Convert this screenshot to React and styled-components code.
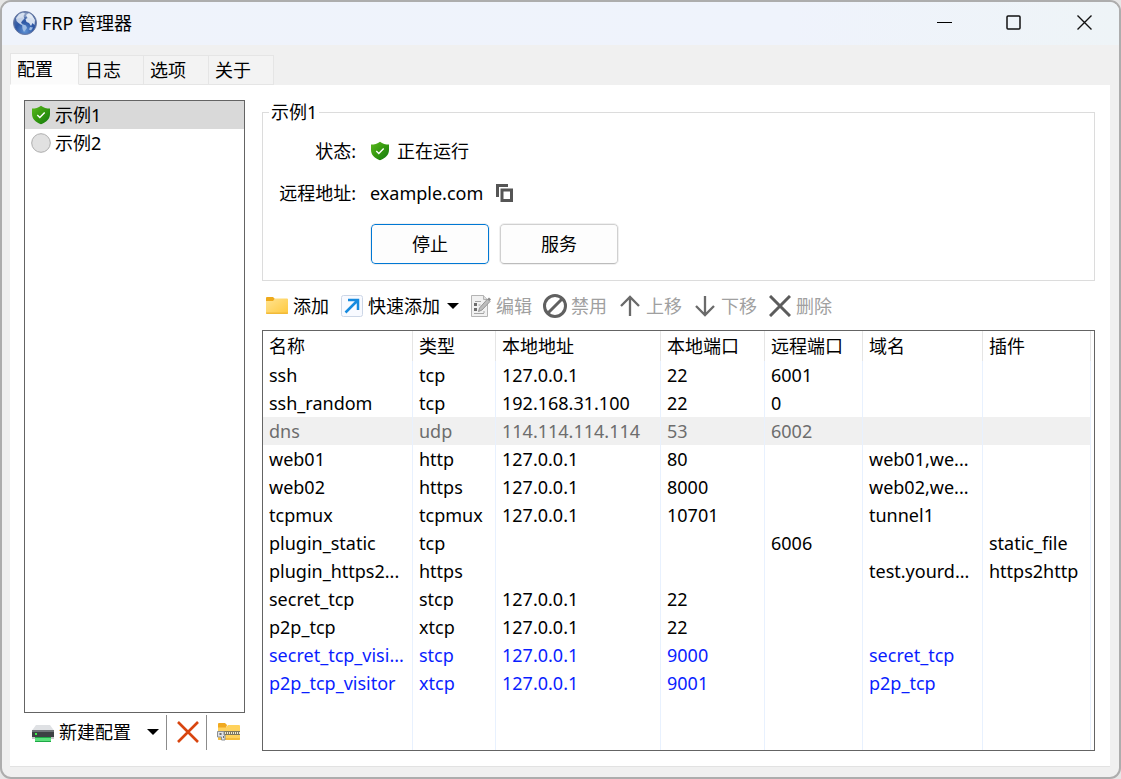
import React, { useState } from "react";
import styled, { createGlobalStyle } from "styled-components";

const GlobalStyle = createGlobalStyle`
  * {
    box-sizing: border-box;
  }

  body {
    margin: 0;
    background: #e6e6e6;
    color: #000;
    font: 18px/24px "Noto Sans", "Noto Sans CJK SC", sans-serif;
  }

  button {
    color: inherit;
    font: inherit;
  }

  svg {
    display: block;
    flex: none;
  }
`;

const Window = styled.div`
  display: flex;
  flex-direction: column;
  min-height: 100vh;
  border: 2px solid #adadad;
  border-radius: 11px;
  background: #f0f0f0;
  overflow: hidden;
`;

const TitleBar = styled.header`
  display: flex;
  align-items: center;
  gap: 5px;
  height: 43px;
  padding: 0 0 2px 11px;
  background: linear-gradient(to right, #eff3fb, #eff3fc 70%, #eef4f7);
`;

const Title = styled.h1`
  flex: 1;
  margin: 0;
  font-size: 18px;
  font-weight: 400;
`;

const WindowButtons = styled.div`
  display: flex;
`;

const WindowButton = styled.button`
  display: flex;
  align-items: center;
  justify-content: center;
  width: 70px;
  height: 41px;
  padding: 0;
  border: 0;
  background: none;
`;

const Tabs = styled.nav`
  display: flex;
  align-items: flex-end;
  height: 40px;
  padding: 0 8px;
`;

const Tab = styled.button`
  width: ${props => (props.$active ? 69 : 65)}px;
  height: ${props => (props.$active ? 32 : 30)}px;
  padding: 0 6px;
  border: 1px solid #e5e5e5;
  border-bottom-color: ${props => (props.$active ? "#fdfdfd" : "#e5e5e5")};
  border-left-width: ${props => (props.$active ? 1 : 0)}px;
  background: ${props => (props.$active ? "#fbfbfb" : "#f3f3f3")};
  text-align: left;
`;

const Panel = styled.main`
  display: flex;
  flex: 1;
  gap: 17px;
  margin: 0 9px 10px 8px;
  padding: 15px 15px 15px 14px;
  border-bottom: 1px solid #e2e2e2;
  background: #fff;
`;

const Sidebar = styled.aside`
  display: flex;
  flex: none;
  flex-direction: column;
  width: 221px;
`;

const ConfigList = styled.ul`
  flex: 1;
  margin: 0;
  padding: 0;
  border: 1px solid #646464;
  list-style: none;
`;

const ConfigItem = styled.li`
  display: flex;
  align-items: center;
  gap: 4px;
  height: 28px;
  padding-left: 6px;
  background: ${props => (props.$selected ? "#d9d9d9" : "none")};
`;

const SidebarTools = styled.div`
  display: flex;
  align-items: center;
  height: 38px;
  padding-left: 8px;
`;

const ToolButton = styled.button`
  display: flex;
  flex: none;
  align-items: center;
  gap: 5px;
  padding: 0;
  border: 0;
  background: none;
  color: ${props => (props.disabled ? "#a0a0a0" : "#000")};
  white-space: nowrap;
`;

const SidebarButton = styled(ToolButton)`
  height: 35px;
  padding: 0 7px 0 10px;
  border-left: 1px solid #8c8c8c;

  &:first-child {
    padding-left: 0;
    border-left: 0;
  }

  &:last-child {
    padding-right: 0;
  }
`;

const Caret = styled.span`
  margin-left: ${props => props.$gap}px;
  border: 6px solid transparent;
  border-top-color: #000;
  border-bottom-width: 0;
`;

const Content = styled.section`
  display: flex;
  flex: 1;
  flex-direction: column;
  min-width: 0;
`;

const Group = styled.fieldset`
  margin: 0;
  padding: 6px 0 16px;
  border: 1px solid #dcdcdc;
`;

const Legend = styled.legend`
  margin-left: 6px;
  padding: 0 2px;
`;

const Fields = styled.dl`
  display: grid;
  grid-template-columns: 93px 1fr;
  grid-auto-rows: 42px;
  column-gap: 14px;
  align-items: center;
  margin: 0;
`;

const FieldName = styled.dt`
  text-align: right;
`;

const FieldValue = styled.dd`
  display: flex;
  align-items: center;
  gap: ${props => props.$gap}px;
  margin: 0;
`;

const IconButton = styled.button`
  padding: 0;
  border: 0;
  background: none;
`;

const Actions = styled.div`
  display: flex;
  gap: 11px;
  padding: 10px 0 0 108px;
`;

const ActionButton = styled.button`
  width: 118px;
  height: 40px;
  padding: 0;
  border: 1px solid ${props => (props.$primary ? "#0078d4" : "#d0d0d0")};
  border-bottom-color: ${props => (props.$primary ? "#0078d4" : "#bcbcbc")};
  border-radius: 4px;
  outline: 1px solid #f0f0f0;
  background: #fdfdfd;
`;

const Toolbar = styled.div`
  display: flex;
  align-items: center;
  gap: 12px;
  height: 49px;
  padding-left: 4px;
`;

const TableFrame = styled.div`
  display: grid;
  flex: 1;
  border: 1px solid #646464;
`;

const Table = styled.table`
  width: 100%;
  height: 100%;
  border-collapse: separate;
  border-spacing: 0;
  table-layout: fixed;
`;

const HeadCell = styled.th`
  height: 30px;
  padding: 0 6px;
  border-right: 1px solid #e5e5e5;
  font-weight: 400;
  text-align: left;
`;

const rowColors = {
  disabled: "#6d6d6d",
  visitor: "#0a1eff"
};

const Row = styled.tr`
  height: 28px;
  color: ${props => rowColors[props.$kind] || "#000"};
`;

const Cell = styled.td`
  padding: 0 6px;
  border-right: 1px solid #e8f1fe;
  background: ${props => (props.$shaded ? "#f0f0f0" : "none")};
  white-space: nowrap;
`;

const EndCell = styled.td`
  padding: 0;
`;

const FillRow = styled.tr`
  height: auto;
`;

const columns = [
  { key: "name", label: "名称", width: 150 },
  { key: "type", label: "类型", width: 83 },
  { key: "localIp", label: "本地地址", width: 165 },
  { key: "localPort", label: "本地端口", width: 104 },
  { key: "remotePort", label: "远程端口", width: 98 },
  { key: "domain", label: "域名", width: 120 },
  { key: "plugin", label: "插件", width: 108 }
];

const proxies = [
  { name: "ssh", type: "tcp", localIp: "127.0.0.1", localPort: "22", remotePort: "6001" },
  { name: "ssh_random", type: "tcp", localIp: "192.168.31.100", localPort: "22", remotePort: "0" },
  { name: "dns", type: "udp", localIp: "114.114.114.114", localPort: "53", remotePort: "6002", kind: "disabled" },
  { name: "web01", type: "http", localIp: "127.0.0.1", localPort: "80", domain: "web01,we..." },
  { name: "web02", type: "https", localIp: "127.0.0.1", localPort: "8000", domain: "web02,we..." },
  { name: "tcpmux", type: "tcpmux", localIp: "127.0.0.1", localPort: "10701", domain: "tunnel1" },
  { name: "plugin_static", type: "tcp", remotePort: "6006", plugin: "static_file" },
  { name: "plugin_https2...", type: "https", domain: "test.yourd...", plugin: "https2http" },
  { name: "secret_tcp", type: "stcp", localIp: "127.0.0.1", localPort: "22" },
  { name: "p2p_tcp", type: "xtcp", localIp: "127.0.0.1", localPort: "22" },
  { name: "secret_tcp_visi...", type: "stcp", localIp: "127.0.0.1", localPort: "9000", domain: "secret_tcp", kind: "visitor" },
  { name: "p2p_tcp_visitor", type: "xtcp", localIp: "127.0.0.1", localPort: "9001", domain: "p2p_tcp", kind: "visitor" }
];

const GlobeIcon = () => (
  <svg width="24" height="24" viewBox="0 0 24 24">
    <defs>
      <radialGradient id="globe" cx="50%" cy="85%" r="80%">
        <stop offset="0" stopColor="#5f92d4" />
        <stop offset="0.5" stopColor="#2d56a4" />
        <stop offset="1" stopColor="#5c76a8" />
      </radialGradient>
    </defs>
    <circle cx="12" cy="12" r="11.5" fill="url(#globe)" stroke="#6c7ba3" />
    <path d="M3 7 6 3l4-1.500 2 1L10.500 5l1 2.500L9 10l-1 2 1.500 1-1 1-3-2-2-2z" fill="#c3d1e9" />
    <path d="m13 4 3-2 3 2 3 5-.500 5-2-2-1.500 3-2-3-2.500-1-1-3 2-1z" fill="#d7e1f1" />
    <path d="m9 13 4 1.500 1 2.500-3 4-1.500-3zM17 16l3 .500-2 3-2-1z" fill="#9dbbe4" />
    <path d="M3 8Q6 1.500 12 1.500T21 8Q12 4.500 3 8z" fill="#fff" opacity=".3" />
  </svg>
);

const ShieldIcon = () => (
  <svg width="20" height="20" viewBox="0 0 20 20">
    <defs>
      <linearGradient id="shield" x1="0" y1="0" x2="1" y2="1">
        <stop offset="0" stopColor="#5bb91e" />
        <stop offset="0.5" stopColor="#35990f" />
        <stop offset="1" stopColor="#117a10" />
      </linearGradient>
    </defs>
    <path
      d="M10 .8C7.500 2.800 4.300 3.600 1 3.600V9c0 4.900 3.800 8.300 9 10.200 5.200-1.900 9-5.300 9-10.200V3.600C15.700 3.600 12.500 2.800 10 .8z"
      fill="url(#shield)"
    />
    <path d="m6.300 10 2.500 2.400 4.900-5" fill="none" stroke="#fff" strokeWidth="1.400" />
  </svg>
);

const IdleIcon = () => (
  <svg width="20" height="20" viewBox="0 0 20 20">
    <circle cx="10" cy="10" r="9.300" fill="#e1e1e1" stroke="#adadad" />
  </svg>
);

const CopyIcon = () => (
  <svg width="18" height="18" viewBox="0 0 18 18">
    <path d="M1.500 13V1.500H12" fill="none" stroke="#555" strokeWidth="3" />
    <path d="M6 6h9.500v10.500H6z" fill="none" stroke="#555" strokeWidth="3" />
  </svg>
);

const DriveIcon = () => (
  <svg width="22" height="22" viewBox="0 0 22 22">
    <path d="M4 4h14l4 5.500H0z" fill="#dfe1e4" />
    <path d="M0 9h22v7H0z" fill="#3d4144" />
    <path d="M0 9h22v2H0z" fill="#6e7377" />
    <path d="M3 12h2v2H3z" fill="#3df04a" />
    <path d="M3 16h16v4.500H3z" fill="#5be07c" />
    <path d="M3 16h16v1H3zM3 20h16v1H3z" fill="#1fa846" />
    <path d="M0 16h3v2H0zM19 16h3v2h-3z" fill="#c4c6c8" />
  </svg>
);

const RedCrossIcon = () => (
  <svg width="22" height="22" viewBox="0 0 22 22">
    <path d="m1 1 20 20M21 1 1 21" fill="none" stroke="#d8450f" strokeWidth="2.600" />
  </svg>
);

const ZipIcon = () => (
  <svg width="24" height="22" viewBox="0 0 24 22">
    <path d="M1 3q0-1 1-1h6l2 2-1 3H1z" fill="#f0a920" />
    <path d="M1 6.500h8l2-2.500h11q1 0 1 1v13q0 1-1 1H2q-1 0-1-1z" fill="#ffd25c" />
    <path d="M1 17h22v1q0 1-1 1H2q-1 0-1-1z" fill="#f7bd3c" />
    <path d="M7 10h16v4H7z" fill="#7f785f" />
    <path d="M8 12h15" stroke="#f2ead0" strokeWidth="2" strokeDasharray="1 1" />
    <path d="M.5 10.500H7V14h1v5H4.500v-3h-4z" fill="#dfe1e4" stroke="#8b8f94" />
    <path d="M2.500 12h2v2h-2zM6 15h1v2H6z" fill="#6f6f6f" />
  </svg>
);

const FolderIcon = () => (
  <svg width="22" height="22" viewBox="0 0 22 22">
    <defs>
      <linearGradient id="folder" x1="0" y1="0" x2="1" y2="1">
        <stop offset="0" stopColor="#ffe391" />
        <stop offset="1" stopColor="#ffc93e" />
      </linearGradient>
    </defs>
    <path d="M0 3q0-1 1-1h6l2 2-2 5H0z" fill="#eeaa1c" />
    <path d="M0 6h7l2-2.500h12q1 0 1 1V18q0 1-1 1H1q-1 0-1-1z" fill="url(#folder)" />
    <path d="M0 17.500h22q0 1.500-1 1.500H1q-1 0-1-1.500z" fill="#f2ba38" />
  </svg>
);

const ShortcutIcon = () => (
  <svg width="22" height="22" viewBox="0 0 22 22">
    <rect x=".5" y=".5" width="21" height="21" rx="2" fill="#f8faff" stroke="#ccd6e6" />
    <path d="M4.500 17.500 17 5M7 5h10v10" fill="none" stroke="#168bdf" strokeWidth="2.500" />
  </svg>
);

const EditIcon = () => (
  <svg width="20" height="22" viewBox="0 0 20 22">
    <path d="M.5.500h12l4 4v17H.5z" fill="#f1f1f1" stroke="#b4b4b4" />
    <path d="M12.500.500v4h4" fill="#ddd" stroke="#b4b4b4" />
    <path d="M3 8h3v3H3zM3 13h3v3H3z" fill="#6c6c6c" />
    <path d="M4 6.500h6M7.500 10h2M3 18.500h10M13 16v2" stroke="#a6a6a6" />
    <path d="m8.500 13 8-9 2.500 2.500-8 8.500-3.500 1.500z" fill="#bdbdbd" stroke="#969696" />
    <path d="m16.500 4 1.500-1.500 2 2L18.500 6z" fill="#8a8a8a" />
  </svg>
);

const BanIcon = () => (
  <svg width="22" height="22" viewBox="1 1 22 22" overflow="visible">
    <circle cx="12" cy="12" r="10.500" fill="none" stroke="#606060" strokeWidth="3" />
    <path d="M5 19 19 5" stroke="#606060" strokeWidth="3" />
  </svg>
);

const UpIcon = () => (
  <svg width="22" height="22" viewBox="0 0 22 22">
    <path d="M11 21V2.500M2 11l9-9 9 9" fill="none" stroke="#6a6a6a" strokeWidth="2.300" />
  </svg>
);

const DownIcon = () => (
  <svg width="22" height="22" viewBox="0 0 22 22">
    <path d="M11 1v18.500M2 11l9 9 9-9" fill="none" stroke="#6a6a6a" strokeWidth="2.300" />
  </svg>
);

const CrossIcon = () => (
  <svg width="22" height="22" viewBox="0 0 22 22">
    <path d="m1 1 20 20M21 1 1 21" fill="none" stroke="#5c5c5c" strokeWidth="3" />
  </svg>
);

const ProxyTable = () => (
  <TableFrame>
    <Table>
      <colgroup>
        {columns.map(column => (
          <col key={column.key} style={{ width: column.width }} />
        ))}
        <col />
      </colgroup>
      <thead>
        <tr>
          {columns.map(column => (
            <HeadCell key={column.key} scope="col">
              {column.label}
            </HeadCell>
          ))}
          <EndCell />
        </tr>
      </thead>
      <tbody>
        {proxies.map(proxy => (
          <Row key={proxy.name} $kind={proxy.kind}>
            {columns.map(column => (
              <Cell key={column.key} $shaded={proxy.kind === "disabled"}>
                {proxy[column.key]}
              </Cell>
            ))}
            <EndCell />
          </Row>
        ))}
        <FillRow>
          {columns.map(column => (
            <Cell key={column.key} />
          ))}
          <EndCell />
        </FillRow>
      </tbody>
    </Table>
  </TableFrame>
);

const App = () => {
  const [tab, setTab] = useState("配置");

  return (
    <>
      <GlobalStyle />
      <Window>
        <TitleBar>
          <GlobeIcon />
          <Title>FRP 管理器</Title>
          <WindowButtons>
            <WindowButton aria-label="最小化">
              <svg width="16" height="16" viewBox="0 0 16 16">
                <path d="M1 7.500h15" stroke="#000" />
              </svg>
            </WindowButton>
            <WindowButton aria-label="最大化">
              <svg width="16" height="16" viewBox="0 0 16 16">
                <rect x="1" y="1" width="13" height="13" rx="1" fill="none" stroke="#111" strokeWidth="1.500" />
              </svg>
            </WindowButton>
            <WindowButton aria-label="关闭">
              <svg width="16" height="16" viewBox="0 0 16 16">
                <path d="m1.500.500 14 14M15.500.500l-14 14" stroke="#111" strokeWidth="1.400" />
              </svg>
            </WindowButton>
          </WindowButtons>
        </TitleBar>

        <Tabs>
          {["配置", "日志", "选项", "关于"].map(name => (
            <Tab key={name} $active={name === tab} onClick={() => setTab(name)}>
              {name}
            </Tab>
          ))}
        </Tabs>

        <Panel>
          <Sidebar>
            <ConfigList>
              <ConfigItem $selected>
                <ShieldIcon />
                示例1
              </ConfigItem>
              <ConfigItem>
                <IdleIcon />
                示例2
              </ConfigItem>
            </ConfigList>
            <SidebarTools>
              <SidebarButton>
                <DriveIcon />
                新建配置
                <Caret $gap={11} />
              </SidebarButton>
              <SidebarButton aria-label="删除配置">
                <RedCrossIcon />
              </SidebarButton>
              <SidebarButton aria-label="导出配置">
                <ZipIcon />
              </SidebarButton>
            </SidebarTools>
          </Sidebar>

          <Content>
            <Group>
              <Legend>示例1</Legend>
              <Fields>
                <FieldName>状态:</FieldName>
                <FieldValue $gap={7}>
                  <ShieldIcon />
                  正在运行
                </FieldValue>
                <FieldName>远程地址:</FieldName>
                <FieldValue $gap={13}>
                  example.com
                  <IconButton aria-label="复制">
                    <CopyIcon />
                  </IconButton>
                </FieldValue>
              </Fields>
              <Actions>
                <ActionButton $primary>停止</ActionButton>
                <ActionButton>服务</ActionButton>
              </Actions>
            </Group>

            <Toolbar>
              <ToolButton>
                <FolderIcon />
                添加
              </ToolButton>
              <ToolButton>
                <ShortcutIcon />
                快速添加
                <Caret $gap={2} />
              </ToolButton>
              <ToolButton disabled>
                <EditIcon />
                编辑
              </ToolButton>
              <ToolButton disabled>
                <BanIcon />
                禁用
              </ToolButton>
              <ToolButton disabled>
                <UpIcon />
                上移
              </ToolButton>
              <ToolButton disabled>
                <DownIcon />
                下移
              </ToolButton>
              <ToolButton disabled>
                <CrossIcon />
                删除
              </ToolButton>
            </Toolbar>

            <ProxyTable />
          </Content>
        </Panel>
      </Window>
    </>
  );
};

export default App;
